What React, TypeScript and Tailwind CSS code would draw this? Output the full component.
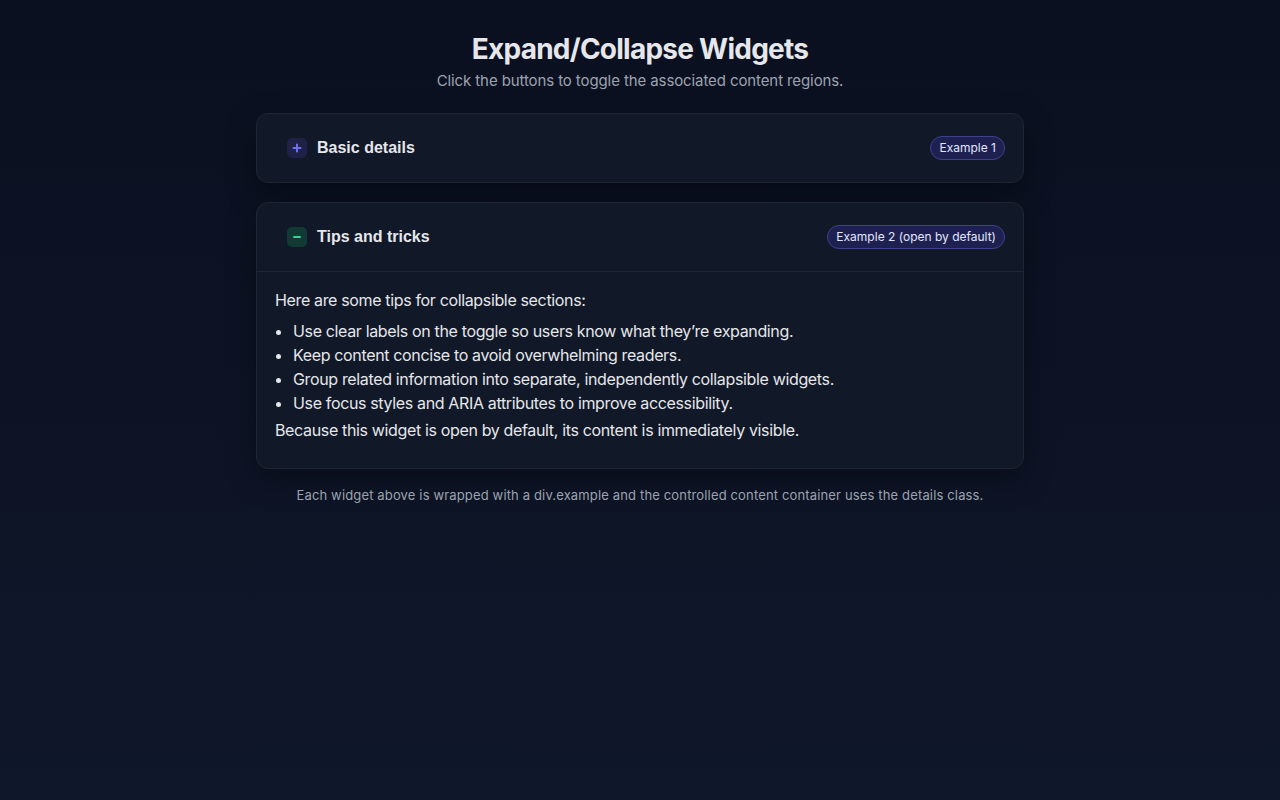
import { useState } from "react";

function Widget({
  title,
  badge,
  defaultOpen,
  children,
}: {
  title: string;
  badge: string;
  defaultOpen?: boolean;
  children: React.ReactNode;
}) {
  const [open, setOpen] = useState(!!defaultOpen);

  return (
    <div className="example rounded-xl border border-[#1f2633] bg-[#111827] shadow-[0_10px_30px_rgba(0,0,0,0.35)]">
      <div className="flex h-[68px] items-center justify-between pl-[30px] pr-[18px]">
        <button
          onClick={() => setOpen(!open)}
          aria-expanded={open}
          className="flex items-center gap-[10px] font-['Liberation_Sans',Arial,sans-serif] text-base font-bold text-[#e5e7eb]"
        >
          {open ? (
            <span className="flex h-5 w-5 items-center justify-center rounded-[5px] bg-[#113a35]">
              <span className="h-[2px] w-2 rounded bg-[#34d399]" />
            </span>
          ) : (
            <span className="flex h-5 w-5 items-center justify-center rounded-[5px] bg-[#1f2147] text-[#6d6ff5]">
              <svg width="10" height="10" viewBox="0 0 10 10">
                <path d="M5 1.5v7M1.5 5h7" stroke="currentColor" strokeWidth="2" strokeLinecap="round" />
              </svg>
            </span>
          )}
          {title}
        </button>
        <span className="rounded-full border border-[#3d428f] bg-[#1e2150] px-2 py-[4px] text-xs leading-[14px] text-[#e0e7ff]">
          {badge}
        </span>
      </div>
      {open && (
        <div className="details border-t border-[#1f2633] px-[18px] pb-[26px] pt-4 text-base leading-6 tracking-[-0.35px] text-[#e5e7eb]">
          {children}
        </div>
      )}
    </div>
  );
}

export default function App() {
  return (
    <div className="min-h-screen bg-gradient-to-b from-[#0b1020] to-[#0f172a] font-['Inter',sans-serif]">
      <div className="mx-auto w-[768px] pt-[30px]">
        <h1 className="text-center text-[28px] font-bold leading-[38px] tracking-[-0.75px] text-[#e5e7eb]">
          Expand/Collapse Widgets
        </h1>
        <p className="mt-[3px] text-center text-[15px] leading-5 tracking-[-0.1px] text-[#9ca3af]">
          Click the buttons to toggle the associated content regions.
        </p>

        <div className="mt-[22px] flex flex-col gap-[19px]">
          <Widget title="Basic details" badge="Example 1">
            <p>This widget starts collapsed. Use the toggle to reveal its content.</p>
          </Widget>
          <Widget title="Tips and tricks" badge="Example 2 (open by default)" defaultOpen>
            <p>Here are some tips for collapsible sections:</p>
            <ul className="mt-[7px] list-disc pl-[18px]">
              <li>Use clear labels on the toggle so users know what they’re expanding.</li>
              <li>Keep content concise to avoid overwhelming readers.</li>
              <li>Group related information into separate, independently collapsible widgets.</li>
              <li>Use focus styles and ARIA attributes to improve accessibility.</li>
            </ul>
            <p className="mt-[3px]">
              Because this widget is open by default, its content is immediately visible.
            </p>
          </Widget>
        </div>

        <p className="mt-4 text-center text-[13px] leading-5 tracking-[0.15px] text-[#9ca3af]">
          Each widget above is wrapped with a div.example and the controlled content container uses the details class.
        </p>
      </div>
    </div>
  );
}
